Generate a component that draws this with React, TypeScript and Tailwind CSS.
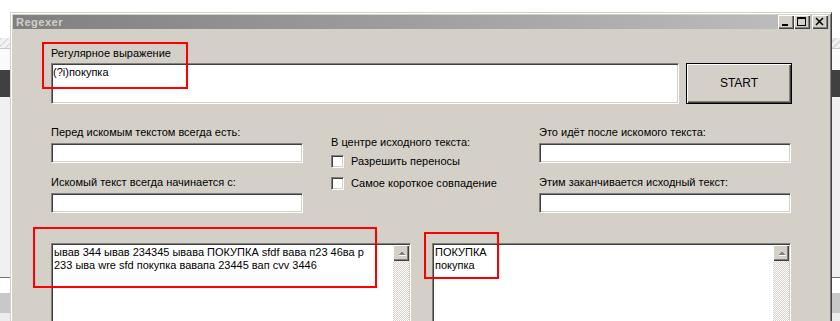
import React from 'react';

const sunken =
  'border border-t-[#808080] border-l-[#808080] border-r-white border-b-white bg-white shadow-[inset_1px_1px_0_#404040,inset_-1px_-1px_0_#d4d0c8]';
const raised =
  'bg-[#d4d0c8] shadow-[inset_1px_1px_0_#ffffff,inset_-1px_-1px_0_#404040,inset_-2px_-2px_0_#808080]';

function Field({ label, className = '' }: { label: string; className?: string }) {
  return (
    <div className={className}>
      <div className="whitespace-nowrap">{label}</div>
      <div className={`mt-[4px] h-[20px] w-[252px] ${sunken}`} />
    </div>
  );
}

function Check({ label }: { label: string }) {
  return (
    <div className="flex items-center gap-[7px]">
      <div className={`h-[13px] w-[13px] shrink-0 ${sunken}`} />
      <span className="whitespace-nowrap">{label}</span>
    </div>
  );
}

function Scrollbar() {
  return (
    <div className="flex w-[16px] shrink-0 flex-col">
      <div className={`flex h-[16px] items-center justify-center ${raised}`}>
        <svg width="9" height="6" viewBox="0 0 9 6" shapeRendering="crispEdges">
          <path d="M1 5 L4.5 1.5 L8 5 Z" fill="#ffffff" transform="translate(0.6 0.6)" />
          <path d="M1 5 L4.5 1.5 L8 5 Z" fill="#808080" />
        </svg>
      </div>
      <div className="flex-1 bg-[repeating-conic-gradient(#d4d0c8_0_25%,#ffffff_0_50%)] bg-[length:2px_2px]" />
    </div>
  );
}

function TextArea({ lines, className = '' }: { lines: string[]; className?: string }) {
  return (
    <div className={`flex h-[90px] p-[1px] ${sunken} ${className}`}>
      <div className="flex-1 pl-[1px] pt-[1px]">
        {lines.map((l) => (
          <div key={l} className="whitespace-nowrap">
            {l}
          </div>
        ))}
      </div>
      <Scrollbar />
    </div>
  );
}

function CaptionButton({ children }: { children: React.ReactNode }) {
  return (
    <div className={`flex h-[14px] w-[16px] items-center justify-center ${raised}`}>
      <svg width="16" height="14" viewBox="0 0 16 14" shapeRendering="crispEdges">
        {children}
      </svg>
    </div>
  );
}

export default function App() {
  return (
    <div className="relative h-[321px] w-[840px] overflow-hidden bg-white font-['Liberation_Sans',Arial,sans-serif] text-[11px] leading-[13px] text-black">
      {/* backdrop: the app behind the dialog */}
      <div className="absolute inset-0 flex flex-col">
        <div className="h-[38px] bg-white" />
        <div className="h-[10px] bg-[repeating-linear-gradient(135deg,#dcdcdc_0_2px,#f2f2f2_2px_5px)]" />
        <div className="h-[22px] border-t border-[#c8c8c8] bg-[#fafafa]" />
        <div className="h-[27px] bg-[#404040]" />
        <div className="h-[180px] bg-[#f0f0f0]" />
        <div className="h-[16px] border-t border-[#707070] bg-white" />
        <div className="h-[20px] bg-[#c8c8c8]" />
        <div className="flex-1 bg-[#ececec]" />
      </div>

      {/* dialog window */}
      <div className="absolute left-[10px] top-[12px] flex h-[320px] w-[822px] flex-col border border-t-[#d4d0c8] border-l-[#d4d0c8] border-r-[#404040] border-b-[#404040] bg-[#d4d0c8] p-[2px] shadow-[inset_1px_1px_0_#ffffff,inset_-1px_-1px_0_#808080]">
        <div className="flex h-[18px] items-center justify-between bg-gradient-to-r from-[#808080] to-[#c0c0c0] pl-[3px] pr-[1px]">
          <span className="text-[11px] font-bold tracking-[0.5px] text-[#d4d0c8]">Regexer</span>
          <div className="flex items-center">
            <CaptionButton>
              <rect x="4" y="9" width="6" height="2" fill="#000" />
            </CaptionButton>
            <CaptionButton>
              <rect x="3" y="2" width="9" height="2" fill="#000" />
              <rect x="3" y="2" width="1" height="9" fill="#000" />
              <rect x="11" y="2" width="1" height="9" fill="#000" />
              <rect x="3" y="10" width="9" height="1" fill="#000" />
            </CaptionButton>
            <div className="ml-[2px]">
              <CaptionButton>
                <path d="M4 3 L11 10 M11 3 L4 10" stroke="#000" strokeWidth="1.5" fill="none" shapeRendering="geometricPrecision" />
              </CaptionButton>
            </div>
          </div>
        </div>

        <div className="flex-1 pl-[38px] pt-[18px]">
          <div>Регулярное выражение</div>
          <div className="mt-[3px] flex">
            <div className={`h-[41px] w-[628px] pl-[1px] pt-[2px] ${sunken}`}>(?i)покупка</div>
            <button className="ml-[7px] flex h-[41px] w-[106px] items-center justify-center border border-black bg-[#d4d0c8] text-[12px] shadow-[inset_1px_1px_0_#ffffff,inset_-1px_-1px_0_#404040,inset_-2px_-2px_0_#808080]">
              START
            </button>
          </div>

          <div className="flex">
            <div className="mt-[22px]">
              <Field label="Перед искомым текстом всегда есть:" />
              <Field label="Искомый текст всегда начинается с:" className="mt-[13px]" />
            </div>
            <div className="ml-[28px] mt-[32px] w-[208px]">
              <div>В центре исходного текста:</div>
              <div className="mt-[6px] flex flex-col gap-[9px]">
                <Check label="Разрешить переносы" />
                <Check label="Самое короткое совпадение" />
              </div>
            </div>
            <div className="mt-[22px]">
              <Field label="Это идёт после искомого текста:" />
              <Field label="Этим заканчивается исходный текст:" className="mt-[13px]" />
            </div>
          </div>

          <div className="mt-[30px] flex gap-[21px]">
            <TextArea
              className="w-[360px]"
              lines={[
                'ывав 344 ывав 234345 ывава ПОКУПКА sfdf вава п23 46ва р',
                '233 ыва wre sfd покупка вавапа 23445 вап cvv 3446',
              ]}
            />
            <TextArea className="w-[359px]" lines={['ПОКУПКА', 'покупка']} />
          </div>
        </div>
      </div>

      {/* red annotation frames */}
      <div className="absolute left-[42px] top-[42px] h-[47px] w-[146px] border-2 border-[#ff0000]" />
      <div className="absolute left-[33px] top-[227px] h-[61px] w-[344px] border-2 border-[#ff0000]" />
      <div className="absolute left-[424px] top-[232px] h-[47px] w-[75px] border-2 border-[#ff0000]" />
    </div>
  );
}
